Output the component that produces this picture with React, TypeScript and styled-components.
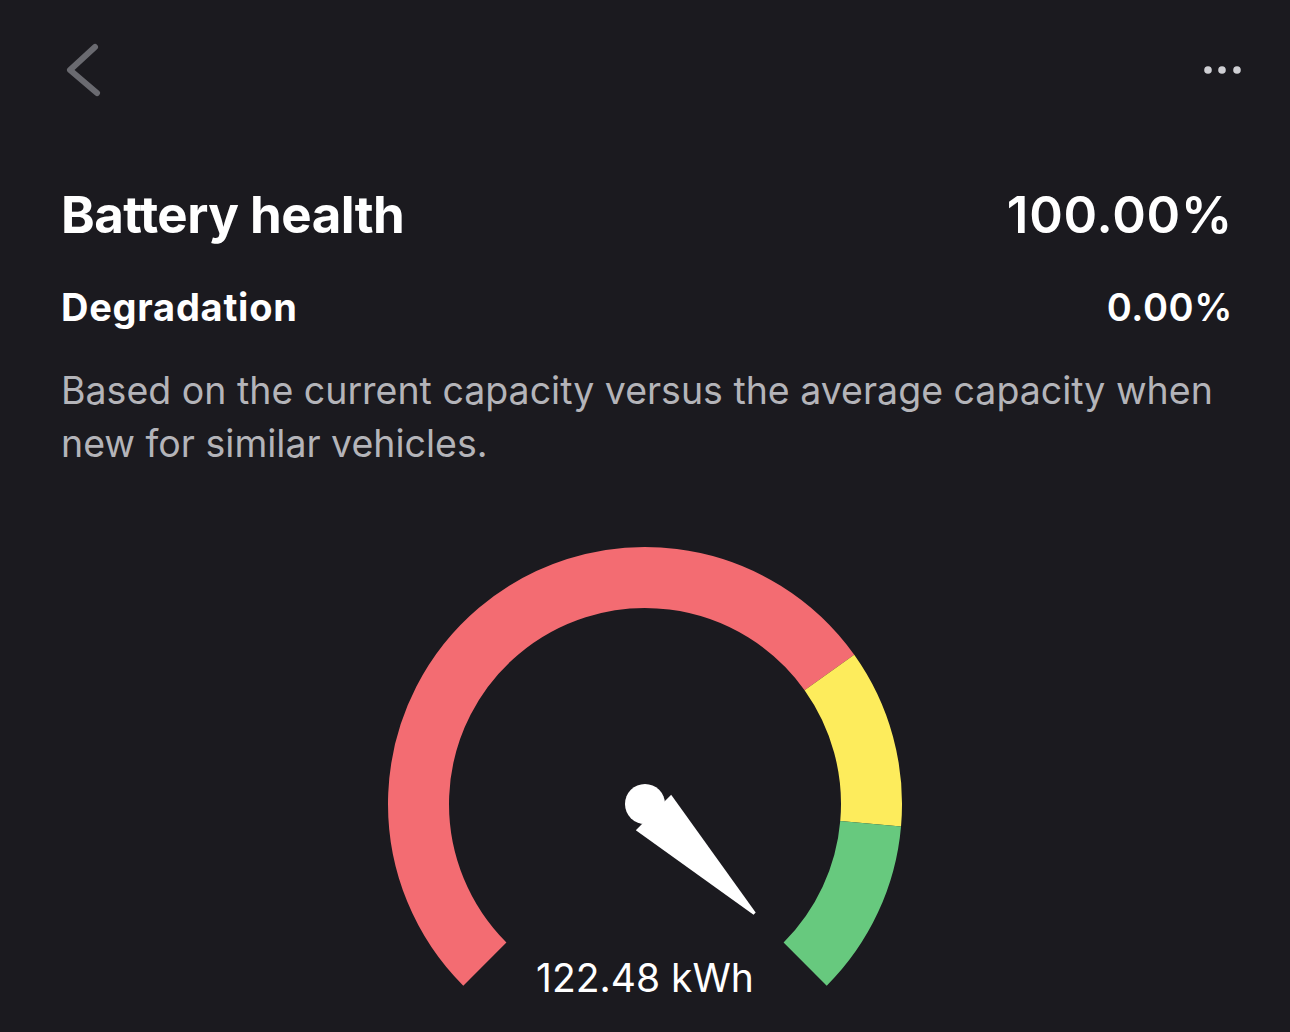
import styled, { createGlobalStyle } from "styled-components";

const GlobalStyle = createGlobalStyle`
  html, body {
    margin: 0;
    padding: 0;
    background: #1b1a1f;
  }
  body {
    font-family: Inter, "Noto Sans", sans-serif;
    color: #ffffff;
  }
`;

const Screen = styled.div`
  width: 1290px;
  height: 1032px;
  overflow: hidden;
  background: #1b1a1f;
  display: flex;
  flex-direction: column;
`;

const TopBar = styled.header`
  height: 140px;
  display: flex;
  align-items: center;
  justify-content: space-between;
  padding: 0 46px 0 60px;
`;

const IconButton = styled.button`
  background: none;
  border: 0;
  padding: 0;
  display: flex;
  align-items: center;
  justify-content: center;
  cursor: pointer;
`;

const Content = styled.main`
  padding: 44px 57px 0 61px;
  display: flex;
  flex-direction: column;
`;

const Row = styled.div<{ $gap: number }>`
  display: flex;
  justify-content: space-between;
  align-items: baseline;
  margin-bottom: ${(p) => p.$gap}px;
`;

const Label = styled.span<{ $size: number; $track?: number }>`
  font-size: ${(p) => p.$size}px;
  line-height: ${(p) => Math.round(p.$size * 1.21)}px;
  font-weight: 700;
  letter-spacing: ${(p) => p.$track ?? -0.01}em;
`;

const Value = styled.span<{ $size: number }>`
  font-size: ${(p) => p.$size}px;
  line-height: ${(p) => Math.round(p.$size * 1.21)}px;
  font-weight: 600;
  letter-spacing: 0.015em;
`;

const Note = styled.p`
  margin: 0 4px 0 0;
  font-size: 37.5px;
  line-height: 53px;
  color: #b4b4b9;
  font-weight: 400;
`;

const GaugeWrap = styled.div`
  position: relative;
  align-self: center;
  width: 540px;
  height: 480px;
  margin-top: 64px;
  margin-left: -4px;
`;

const GaugeLabel = styled.div`
  position: absolute;
  left: 0;
  right: 0;
  top: 420px;
  text-align: center;
  font-size: 39px;
  line-height: 48px;
  color: #ffffff;
`;

const CX = 270;
const CY = 270;
const R = 226.5;
const STROKE = 61;

const pt = (deg: number, r = R) => {
  const a = (deg * Math.PI) / 180;
  return `${(CX + r * Math.sin(a)).toFixed(2)} ${(CY - r * Math.cos(a)).toFixed(2)}`;
};

const arc = (from: number, to: number) =>
  `M ${pt(from)} A ${R} ${R} 0 ${to - from > 180 ? 1 : 0} 1 ${pt(to)}`;

const SEGMENTS = [
  { from: -135, to: 54.5, color: "#f36c72" },
  { from: 54.5, to: 95, color: "#fdec5c" },
  { from: 95, to: 135, color: "#67c97e" },
];

const Gauge = ({ value }: { value: number }) => {
  // value 0..1 across a 270deg sweep
  const angle = -135 + 270 * value;
  return (
    <svg width="540" height="480" viewBox="0 0 540 480">
      {SEGMENTS.map((s) => (
        <path
          key={s.color}
          d={arc(s.from, s.to)}
          fill="none"
          stroke={s.color}
          strokeWidth={STROKE}
        />
      ))}
      <g transform={`rotate(${angle} ${CX} ${CY})`} fill="#ffffff">
        <circle cx={CX} cy={CY} r={20} />
        <polygon
          points={`${CX - 25},${CY - 12} ${CX + 25},${CY - 12} ${CX + 1.5},${CY - 155} ${CX - 1.5},${CY - 155}`}
        />
      </g>
    </svg>
  );
};

export default function App() {
  return (
    <Screen>
      <GlobalStyle />
      <TopBar>
        <IconButton aria-label="Back">
          <svg width="50" height="60" viewBox="0 0 50 60">
            <path
              d="M35 7 L10 30 L37 53"
              fill="none"
              stroke="#6a6a70"
              strokeWidth="6"
              strokeLinecap="round"
              strokeLinejoin="round"
            />
          </svg>
        </IconButton>
        <IconButton aria-label="More">
          <svg width="44" height="20" viewBox="0 0 44 20">
            <circle cx="8" cy="10" r="3.8" fill="#cfcfd4" />
            <circle cx="22" cy="10" r="3.8" fill="#cfcfd4" />
            <circle cx="37" cy="10" r="3.8" fill="#cfcfd4" />
          </svg>
        </IconButton>
      </TopBar>
      <Content>
        <Row $gap={38}>
          <Label $size={51}>Battery health</Label>
          <Value $size={51}>100.00%</Value>
        </Row>
        <Row $gap={34}>
          <Label $size={38} $track={0.02}>
            Degradation
          </Label>
          <Value $size={38}>0.00%</Value>
        </Row>
        <Note>
          Based on the current capacity versus the average capacity when new
          for similar vehicles.
        </Note>
        <GaugeWrap>
          <Gauge value={1} />
          <GaugeLabel>122.48 kWh</GaugeLabel>
        </GaugeWrap>
      </Content>
    </Screen>
  );
}
